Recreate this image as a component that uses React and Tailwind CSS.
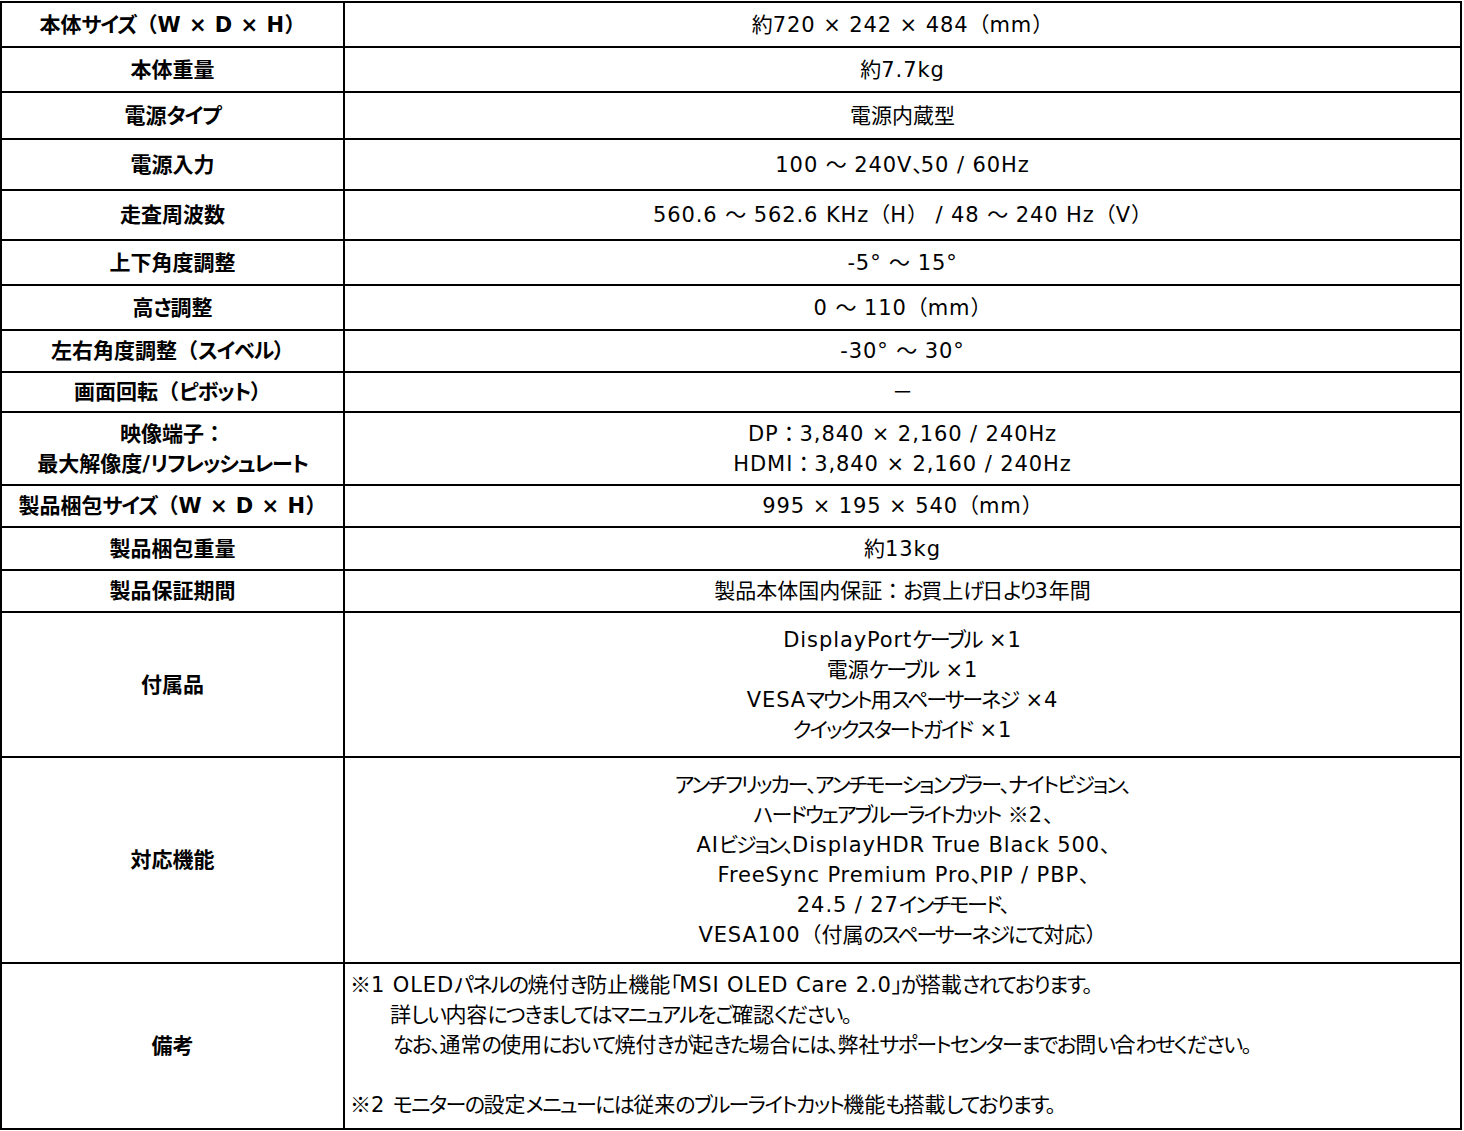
import React from 'react'

const rows = [
    { label: '本体サイズ（W × D × H）', value: ['約720 × 242 × 484（mm）'], h: 'h-[45px]' },
    { label: '本体重量', value: ['約7.7kg'], h: 'h-[45px]' },
    { label: '電源タイプ', value: ['電源内蔵型'], h: 'h-[47px]' },
    { label: '電源入力', value: ['100 ～ 240V、50 / 60Hz'], h: 'h-[51px]' },
    { label: '走査周波数', value: ['560.6 ～ 562.6 KHz（H） / 48 ～ 240 Hz（V）'], h: 'h-[50px]' },
    { label: '上下角度調整', value: ['-5° ～ 15°'], h: 'h-[45px]' },
    { label: '高さ調整', value: ['0 ～ 110（mm）'], h: 'h-[45px]' },
    { label: '左右角度調整（スイベル）', value: ['-30° ～ 30°'], h: 'h-[42px]' },
    { label: '画面回転（ピボット）', value: ['－'], h: 'h-[40px]' },
    { label: ['映像端子：', '最大解像度/リフレッシュレート'], value: ['DP：3,840 × 2,160 / 240Hz', 'HDMI：3,840 × 2,160 / 240Hz'], h: 'h-[73px]' },
    { label: '製品梱包サイズ（W × D × H）', value: ['995 × 195 × 540（mm）'], h: 'h-[42px]' },
    { label: '製品梱包重量', value: ['約13kg'], h: 'h-[43px]' },
    { label: '製品保証期間', value: ['製品本体国内保証：お買上げ日より3年間'], h: 'h-[42px]' },
    {
        label: '付属品',
        value: ['DisplayPortケーブル ×1', '電源ケーブル ×1', 'VESAマウント用スペーサーネジ ×4', 'クイックスタートガイド ×1'],
        h: 'h-[145px]',
    },
    {
        label: '対応機能',
        value: [
            'アンチフリッカー、アンチモーションブラー、ナイトビジョン、',
            'ハードウェアブルーライトカット ※2、',
            'AIビジョン、DisplayHDR True Black 500、',
            'FreeSync Premium Pro、PIP / PBP、',
            '24.5 / 27インチモード、',
            'VESA100（付属のスペーサーネジにて対応）',
        ],
        h: 'h-[206px]',
    },
]

// split a line into latin / kana / other runs so each gets its own spacing
const latinRe = /^[\x20-\x7e×°]+$/
const kanaRe = /^[\u3040-\u30ff、。「」]+$/

const kanaCls = {
    bold: "[font-feature-settings:'palt'] tracking-[-1.2px]",
    note: "[font-feature-settings:'palt'] tracking-[-1.6px]",
    normal: "[font-feature-settings:'palt'] tracking-[-2px]",
}

const Txt = ({ t, v = 'normal' }) => {
    const parts = t.split(/([\x20-\x7e×°]+|[\u3040-\u30ff、。「」]+|※)/).filter(Boolean)
    return (
        <>
            {parts.map((p, i) =>
                p === '※' ? (
                    <span key={i} className="leading-none font-['Noto_Sans_CJK_JP',sans-serif]">{p}</span>
                ) : latinRe.test(p) ? (
                    <span key={i} className={v === 'bold' ? 'tracking-[0.5px]' : 'tracking-[0.9px]'}>{p}</span>
                ) : kanaRe.test(p) ? (
                    <span key={i} className={kanaCls[v]}>{p}</span>
                ) : (
                    <span key={i}>{p}</span>
                )
            )}
        </>
    )
}

const App = () => {
    return (
        <div className="bg-white w-[1464px] h-[1131px] pt-[1px] text-black font-['DejaVu_Sans','Noto_Sans_CJK_JP',sans-serif] text-[21px] leading-[30px]">
            <table className="table-fixed border-collapse w-[1462px]">
                <colgroup>
                    <col className="w-[343px]" />
                    <col />
                </colgroup>
                <tbody>
                    {rows.map((r, i) => (
                        <tr key={i} className={r.h}>
                            <td className="border-2 border-black text-center font-bold p-0">
                                {(Array.isArray(r.label) ? r.label : [r.label]).map((t, j) => (
                                    <div key={j}><Txt t={t} v="bold" /></div>
                                ))}
                            </td>
                            <td className="border-2 border-black text-center p-0">
                                {r.value.map((t, j) => (
                                    <div key={j}><Txt t={t} /></div>
                                ))}
                            </td>
                        </tr>
                    ))}

                    {/* NOTES */}
                    <tr className="h-[166px]">
                        <td className="border-2 border-black text-center font-bold p-0"><Txt t="備考" v="bold" /></td>
                        <td className="border-2 border-black align-top pt-[6px] pl-[5px] pr-0 pb-0 text-left">
                            <div><Txt v="note" t="※1 OLEDパネルの焼付き防止機能「MSI OLED Care 2.0」が搭載されております。" /></div>
                            <div className="pl-[40px]"><Txt v="note" t="詳しい内容につきましてはマニュアルをご確認ください。" /></div>
                            <div className="pl-[43px]"><Txt v="note" t="なお、通常の使用において焼付きが起きた場合には、弊社サポートセンターまでお問い合わせください。" /></div>
                            <div>&nbsp;</div>
                            <div><Txt v="note" t="※2 モニターの設定メニューには従来のブルーライトカット機能も搭載しております。" /></div>
                        </td>
                    </tr>
                </tbody>
            </table>
        </div>
    )
}

export default App
